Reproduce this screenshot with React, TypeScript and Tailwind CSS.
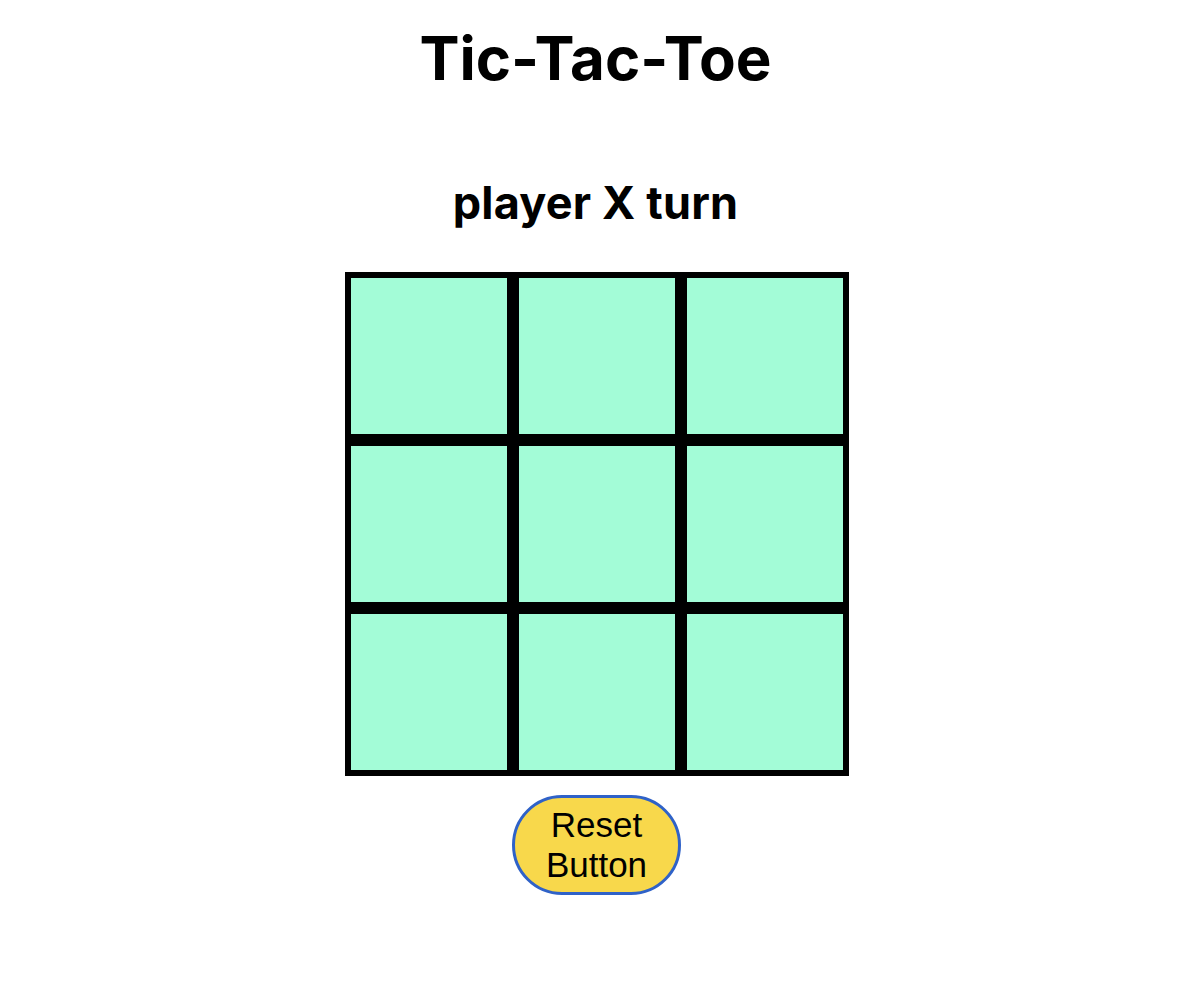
export default function App() {
  const cells = Array.from({ length: 9 });
  return (
    <div className="flex min-h-screen flex-col items-center bg-white text-black">
      <h1 className="mt-[22px] text-[60px] font-bold leading-[72px]" style={{ fontFamily: 'Inter, "Noto Sans", sans-serif' }}>
        Tic-Tac-Toe
      </h1>
      <h2 className="mt-[82px] text-[45px] font-bold leading-[54px] tracking-[0.2px]" style={{ fontFamily: 'Inter, "Noto Sans", sans-serif' }}>
        player X turn
      </h2>
      <div className="ml-[2px] mt-[42px] grid grid-cols-[repeat(3,168px)] grid-rows-[repeat(3,168px)]">
        {cells.map((_, i) => (
          <div key={i} className="border-[6px] border-black bg-[#a3fcd7]" />
        ))}
      </div>
      <button
        className="ml-[2px] mt-[19px] flex h-[100px] w-[169px] items-center justify-center rounded-full border-[3px] border-[#2f62c8] bg-[#f8d84b] text-[35px] leading-[40px] text-black"
        style={{ fontFamily: '"Liberation Sans", Arial, sans-serif' }}
      >
        Reset
        <br />
        Button
      </button>
    </div>
  );
}
